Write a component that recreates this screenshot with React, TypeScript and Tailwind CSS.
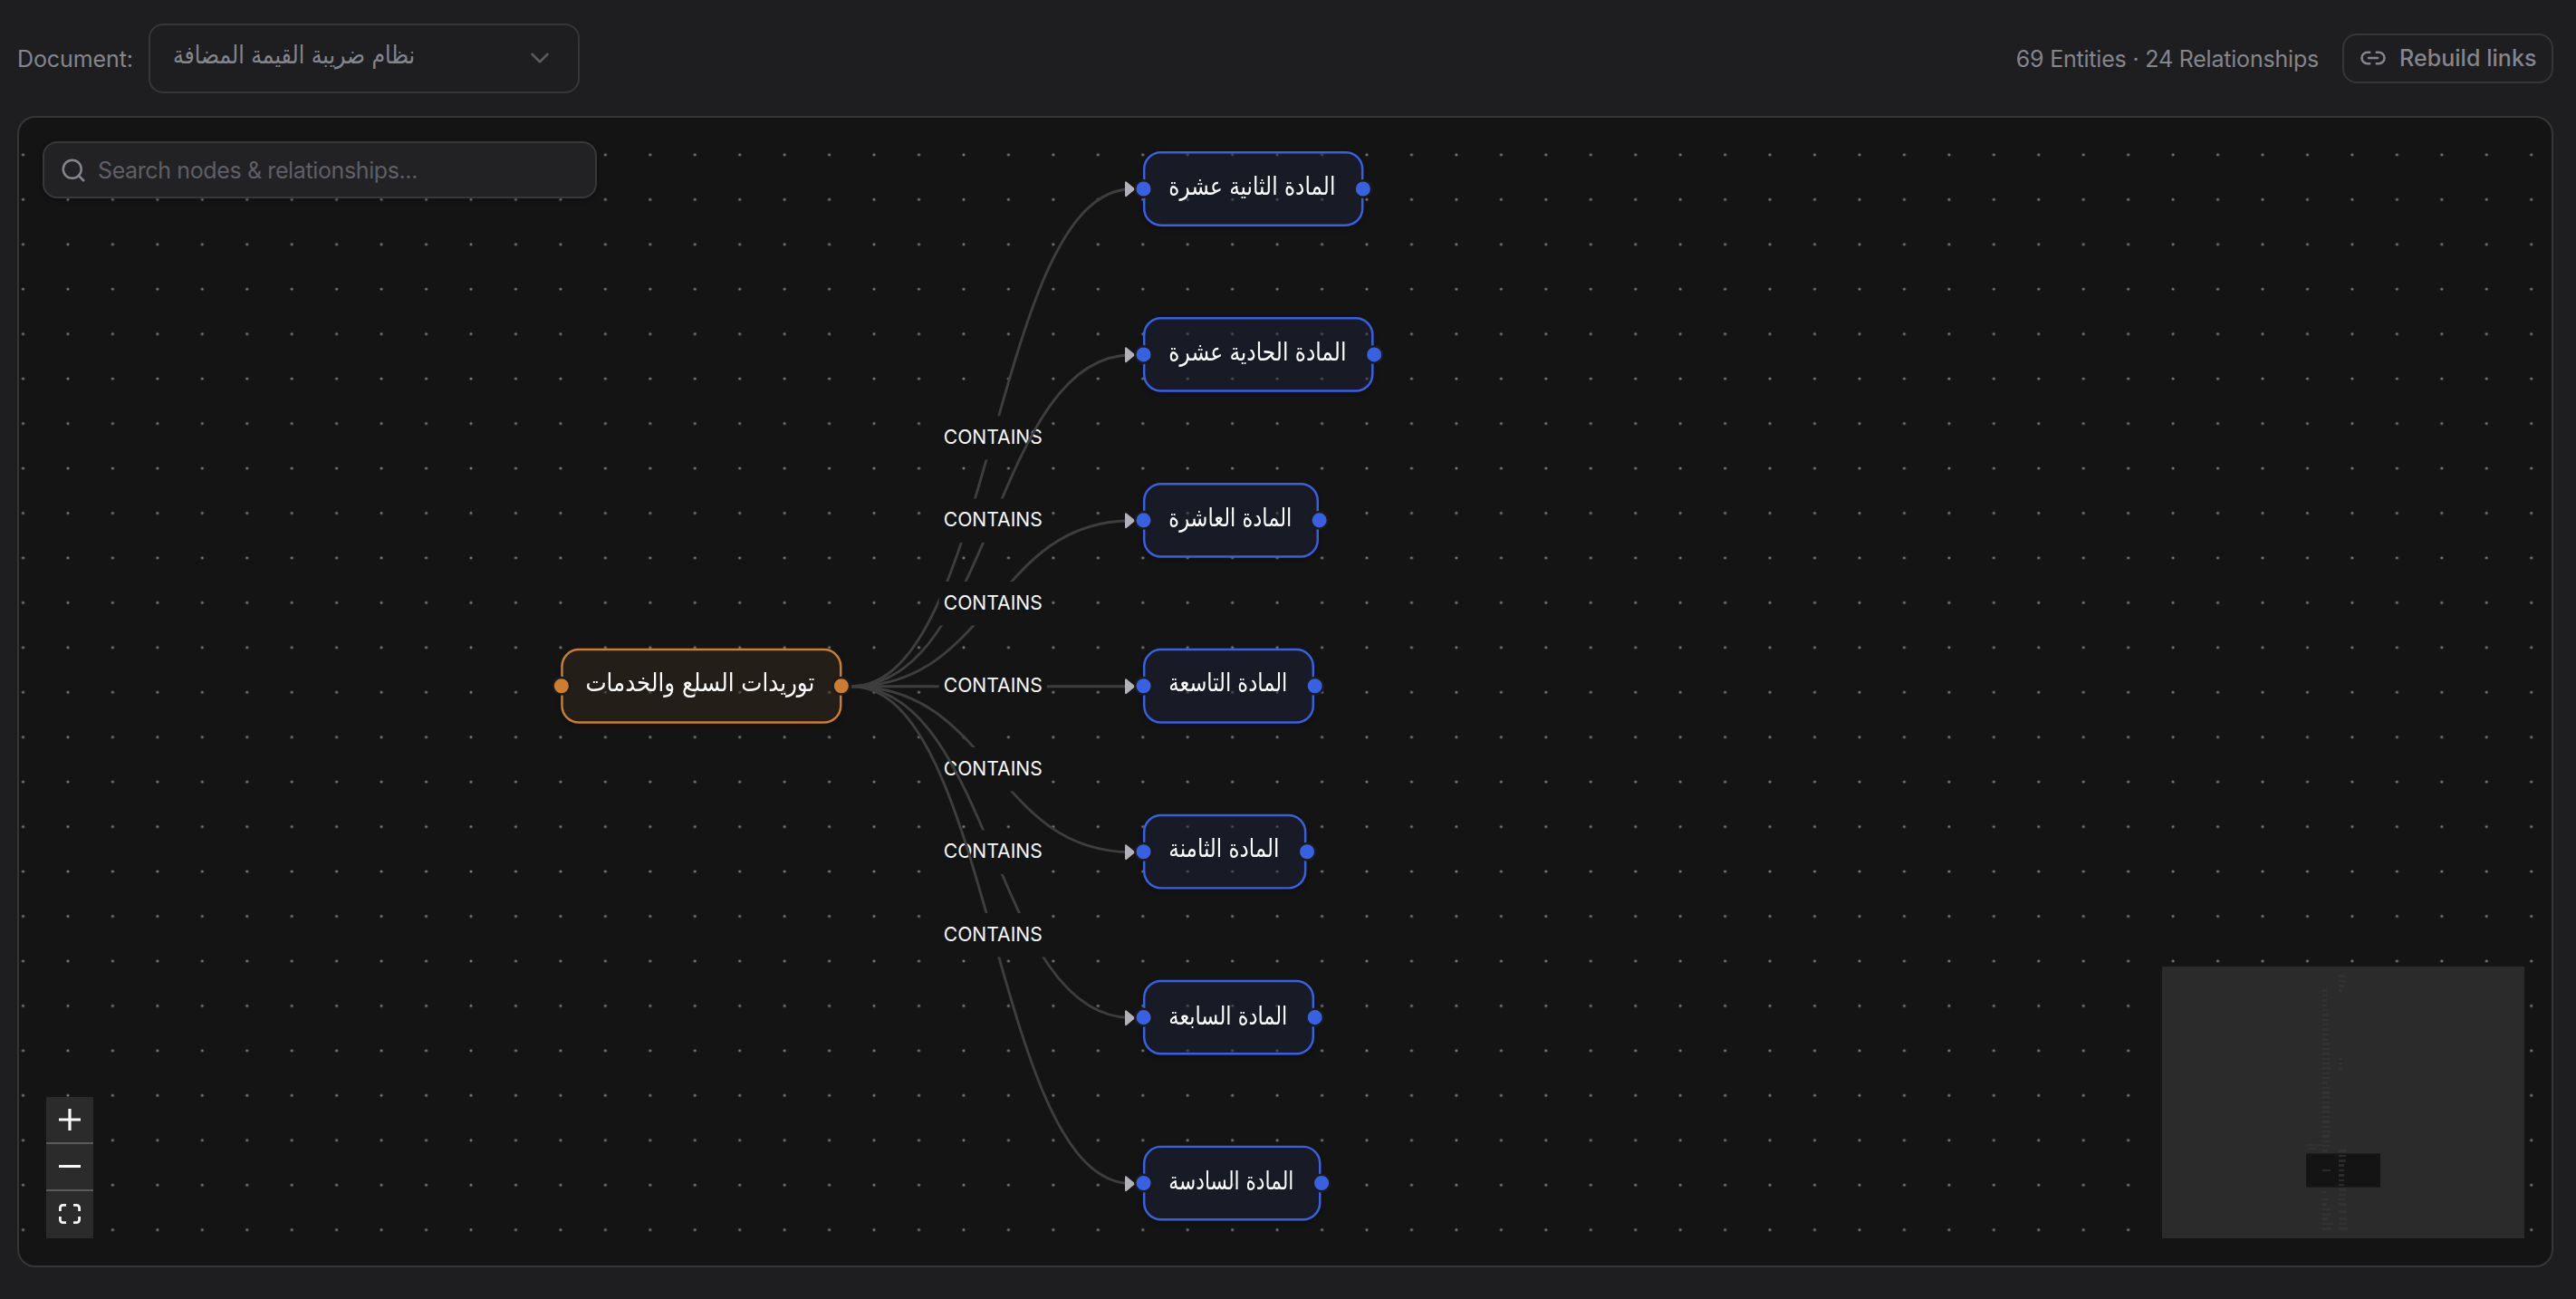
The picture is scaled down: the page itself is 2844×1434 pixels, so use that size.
import { ChevronDown, Link2, Search } from 'lucide-react';

type GraphNode = {
  id: string;
  label: string;
  x: number;
  y: number;
  width: number;
  textWidth: number;
  kind: 'topic' | 'article';
};

// must stay in step with the scale-[1.236] class on the node layer
const ZOOM = 1.236;

const NODES: GraphNode[] = [
  { id: 'supplies', label: 'توريدات السلع والخدمات', x: 598.3, y: 585.5, width: 309.6, textWidth: 253, kind: 'topic' },
  { id: 'art-12', label: 'المادة الثانية عشرة', x: 1241.3, y: 36.5, width: 242.6, textWidth: 184, kind: 'article' },
  { id: 'art-11', label: 'المادة الحادية عشرة', x: 1241.3, y: 219.5, width: 254.7, textWidth: 196, kind: 'article' },
  { id: 'art-10', label: 'المادة العاشرة', x: 1241.3, y: 402.5, width: 194.2, textWidth: 136, kind: 'article' },
  { id: 'art-9', label: 'المادة التاسعة', x: 1241.3, y: 585.5, width: 189.2, textWidth: 131, kind: 'article' },
  { id: 'art-8', label: 'المادة الثامنة', x: 1241.3, y: 768.5, width: 180.6, textWidth: 122, kind: 'article' },
  { id: 'art-7', label: 'المادة السابعة', x: 1241.3, y: 951.5, width: 189.2, textWidth: 131, kind: 'article' },
  { id: 'art-6', label: 'المادة السادسة', x: 1241.3, y: 1134.5, width: 196.6, textWidth: 138, kind: 'article' },
];

const SOURCE = { x: 919, y: 627.7 };
const TARGET_X = 1231.5;
const TARGET_YS = [78.7, 261.7, 444.7, 627.7, 810.7, 993.7, 1176.7];

// [x, y, width, height] in minimap pixels
const MINIMAP_NODES = [
  [177, 25, 5, 3], [177, 31, 5, 2], [177, 36, 5, 3], [177, 42, 5, 2], [177, 47, 5, 2],
  [177, 52, 7, 3], [177, 58, 7, 2], [177, 63, 7, 2], [177, 68, 7, 3], [177, 74, 7, 2],
  [177, 79, 6, 3], [177, 84, 8, 3], [177, 90, 8, 2], [177, 95, 8, 3], [177, 101, 8, 2],
  [177, 106, 9, 2], [177, 111, 9, 3], [177, 117, 8, 2], [177, 122, 8, 2], [177, 127, 5, 3],
  [177, 133, 8, 2], [177, 138, 8, 3], [177, 143, 8, 3], [177, 149, 8, 2], [177, 154, 8, 3],
  [177, 159, 8, 3], [177, 165, 8, 2], [177, 170, 8, 3], [177, 176, 8, 2], [177, 181, 9, 2],
  [177, 186, 8, 3], [177, 192, 8, 2], [177, 197, 8, 2], [177, 202, 6, 3], [177, 224, 9, 2],
  [177, 248, 4, 2], [177, 256, 6, 2], [177, 261, 5, 3], [177, 267, 9, 2], [177, 272, 9, 3],
  [177, 277, 7, 3], [177, 283, 12, 2], [177, 288, 10, 3],
  [195, 9, 7, 3], [195, 15, 8, 2], [195, 20, 6, 3], [195, 25, 4, 3],
  [195, 101, 4, 2], [195, 106, 4, 2], [195, 111, 4, 3],
  [195, 202, 9, 3], [195, 208, 8, 2], [195, 213, 8, 3], [195, 218, 6, 3], [195, 224, 6, 2],
  [195, 229, 6, 3], [195, 235, 6, 2], [195, 240, 6, 2], [195, 245, 8, 3], [195, 251, 8, 2],
  [195, 256, 7, 2], [195, 261, 9, 3], [195, 269, 9, 3], [195, 277, 9, 3], [195, 283, 9, 2],
  [195, 288, 10, 3],
  [159, 196, 8, 2], [168, 196, 9, 2], [161, 200, 9, 2],
];

function Header() {
  return (
    <header className="flex h-[128px] shrink-0 items-center justify-between pr-[25px] pl-[19px]">
      <div className="flex items-center gap-[18px]">
        <span className="w-[127px] pt-[3px] text-[25px] tracking-[-0.1px] whitespace-nowrap text-[#85858d]">Document:</span>
        <button className="flex h-[77px] w-[476px] items-center justify-between rounded-[16px] border-2 border-[#363639] pr-[25px] pl-[25px]">
          <ArabicText text="نظام ضريبة القيمة المضافة" width={267} size={27} baseline={22.5} className="h-[34px] text-[#85858d]" />
          <ChevronDown className="size-[34px] text-[#5b5b60]" strokeWidth={1.8} />
        </button>
      </div>
      <div className="flex items-center gap-[26px]">
        <span className="pt-[3px] text-[25px] tracking-[-0.2px] whitespace-nowrap text-[#85858d]">
          69 Entities · 24 Relationships
        </span>
        <button className="flex h-[55px] w-[233px] items-center gap-[14px] rounded-[16px] border-2 border-[#363639] pl-[17px] text-[25px] font-medium tracking-[0.05px] whitespace-nowrap text-[#85858d]">
          <Link2 className="size-[30px] shrink-0" strokeWidth={2} />
          <span className="pt-[2px]">Rebuild links</span>
        </button>
      </div>
    </header>
  );
}

type ArabicTextProps = {
  text: string;
  width: number;
  size: number;
  baseline: number;
  className: string;
};

function ArabicText({ text, width, size, baseline, className }: ArabicTextProps) {
  return (
    <svg width={width} className={`shrink-0 overflow-visible ${className}`}>
      <text
        x={width / 2}
        y={baseline}
        textAnchor="middle"
        direction="rtl"
        fontSize={size}
        textLength={width}
        lengthAdjust="spacingAndGlyphs"
        fill="currentColor"
        className="font-['DejaVu_Sans',sans-serif]"
      >
        {text}
      </text>
    </svg>
  );
}

function Edges() {
  const midX = (SOURCE.x + TARGET_X) / 2;

  return (
    <svg className="absolute inset-0 size-full">
      <defs>
        <pattern id="dots" x="-20.22" y="16.08" width="49.45" height="49.45" patternUnits="userSpaceOnUse">
          <circle cx="24.72" cy="24.72" r="1.6" fill="#777777" />
        </pattern>
      </defs>
      <rect width="100%" height="100%" fill="url(#dots)" />
      {TARGET_YS.map((y) => {
        const labelY = (SOURCE.y + y) / 2;
        return (
          <g key={y}>
            <path
              d={`M${SOURCE.x} ${SOURCE.y} C${midX} ${SOURCE.y} ${midX} ${y} ${TARGET_X - 3} ${y}`}
              fill="none"
              stroke="#3e3e3e"
              strokeWidth="2.9"
            />
            <path
              d={`M${TARGET_X - 9.5} ${y - 7.5} L${TARGET_X - 0.5} ${y} L${TARGET_X - 9.5} ${y + 7.5} Z`}
              fill="#b1b1b7"
              stroke="#b1b1b7"
              strokeWidth="2"
              strokeLinejoin="round"
            />
            <rect x={midX - 59.5} y={labelY - 24.2} width="119" height="48.4" fill="#141414" />
            <text
              x={midX}
              y={labelY + 6.6}
              textAnchor="middle"
              fontSize="22"
              textLength="109"
              lengthAdjust="spacingAndGlyphs"
              fill="#f8f8f8"
            >
              CONTAINS
            </text>
          </g>
        );
      })}
    </svg>
  );
}

function Handle({ side, kind }: { side: 'left' | 'right'; kind: GraphNode['kind'] }) {
  const place = side === 'left' ? 'left-[-10.5px]' : 'right-[-10.5px]';
  const color = kind === 'topic' ? 'bg-[#cc7d30]' : 'bg-[#3860e2]';
  return <span className={`absolute top-[23.6px] size-[17px] rounded-full border-2 border-[#1b1b1d] ${place} ${color}`} />;
}

function NodeCard({ node }: { node: GraphNode }) {
  const tone =
    node.kind === 'topic' ? 'border-[#cc7d30] bg-[rgba(52,40,28,0.5)]' : 'border-[#3860e2] bg-[rgba(28,32,54,0.5)]';

  return (
    <div
      className={`absolute flex h-[67.4px] items-center justify-center rounded-[16px] border-2 pr-[1.5px] shadow-[0_2px_4px_rgba(0,0,0,0.2)] ${tone}`}
      style={{ left: node.x / ZOOM, top: node.y / ZOOM, width: node.width / ZOOM }}
    >
      <ArabicText
        text={node.label}
        width={node.textWidth / ZOOM}
        size={22.5}
        baseline={20.5}
        className="h-[30px] text-white"
      />
      <Handle side="left" kind={node.kind} />
      <Handle side="right" kind={node.kind} />
    </div>
  );
}

function SearchBox() {
  return (
    <div className="absolute top-[26px] left-[26px] flex h-[63px] w-[612px] items-center rounded-[16px] border-2 border-[#38383b] bg-[#222224] pl-[17px] shadow-[0_2px_5px_rgba(0,0,0,0.25)]">
      <Search className="size-[30px] text-[#85858d]" strokeWidth={2} />
      <span className="ml-[12px] pt-[3px] text-[25px] tracking-[-0.38px] whitespace-nowrap text-[#5f5f66]">
        Search nodes &amp; relationships...
      </span>
    </div>
  );
}

function Controls() {
  const button = 'flex items-center justify-center h-[52px] w-full';

  return (
    <div className="absolute top-[1081px] left-[30px] flex w-[52px] flex-col bg-[#2b2b2b] text-[#f8f8f8]">
      <button className={`${button} border-b-2 border-[#5b5b5b]`}>
        <svg viewBox="0 0 24 24" className="size-[24px]" fill="none" stroke="currentColor" strokeWidth="3.2">
          <path d="M12 0v24M0 12h24" />
        </svg>
      </button>
      <button className={`${button} border-b-2 border-[#5b5b5b]`}>
        <svg viewBox="0 0 24 24" className="size-[24px]" fill="none" stroke="currentColor" strokeWidth="3">
          <path d="M0 11.5h24" />
        </svg>
      </button>
      <button className={`${button} pb-[2px]`}>
        <svg viewBox="0 0 24 22" className="h-[22px] w-[24px]" fill="none" stroke="currentColor" strokeWidth="2.8">
          <path d="M1.4 8V4.4a3 3 0 0 1 3-3H8M16 1.4h3.6a3 3 0 0 1 3 3V8M22.6 14v3.6a3 3 0 0 1-3 3H16M8 20.6H4.4a3 3 0 0 1-3-3V14" />
        </svg>
      </button>
    </div>
  );
}

function MiniMap() {
  return (
    <svg viewBox="0 0 400 300" className="absolute right-[30px] bottom-[30px] h-[300px] w-[400px] bg-[#2b2b2b]" shapeRendering="crispEdges">
      <rect x="159" y="206" width="82" height="38" fill="#1d1d1d" />
      <rect x="159" y="207" width="82" height="36" fill="#141414" />
      {MINIMAP_NODES.map(([x, y, width, height]) => (
        <rect key={`${x}-${y}`} x={x} y={y} width={width} height={height} fill={y > 206 && y < 243 ? '#2b2b2b' : '#323232'} />
      ))}
    </svg>
  );
}

export default function App() {
  return (
    <div className="flex h-[1434px] w-[2844px] flex-col overflow-hidden bg-[#1e1e20] font-['Inter',sans-serif]">
      <Header />
      <main className="relative mr-[25px] mb-[35px] ml-[19px] flex-1 overflow-hidden rounded-[20px] border-2 border-[#363639] bg-[#141414]">
        <Edges />
        <div className="absolute top-0 left-0 origin-top-left scale-[1.236]">
          {NODES.map((node) => (
            <NodeCard key={node.id} node={node} />
          ))}
        </div>
        <SearchBox />
        <Controls />
        <MiniMap />
      </main>
    </div>
  );
}
